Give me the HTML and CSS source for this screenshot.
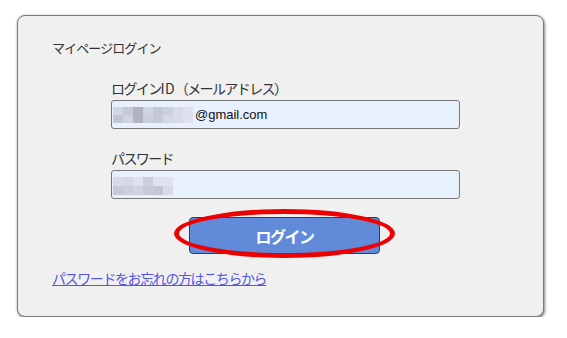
FILE: index.html
```html
<!DOCTYPE html>
<html lang="ja">
<head>
<meta charset="utf-8">
<title>マイページログイン</title>
<link rel="stylesheet" href="styles.css">
</head>
<body>
<div class="page">
  <div class="card">
    <div class="title">マイページログイン</div>
    <div class="form">
      <div class="label first">ログイン<span class="latin">ID</span>（メールアドレス）</div>
      <div class="input">
        <div class="blur email">
          <i class="c1"></i><i class="c2"></i><i class="c3"></i><i class="c4"></i><i class="c5"></i><i class="c6"></i><i class="c7"></i><i class="c8"></i>
          <i class="c5"></i><i class="c4"></i><i class="c3"></i><i class="c6"></i><i class="c2"></i><i class="c1"></i><i class="c7"></i><i class="c8"></i>
        </div>
        <span class="value">@gmail.com</span>
      </div>
      <div class="label">パスワード</div>
      <div class="input">
        <div class="blur pass">
          <i class="c7"></i><i class="c1"></i><i class="c8"></i><i class="c6"></i><i class="c8"></i><i class="c8"></i>
          <i class="c2"></i><i class="c6"></i><i class="c4"></i><i class="c2"></i><i class="c5"></i><i class="c7"></i>
        </div>
      </div>
      <div class="actions">
        <div class="button-wrap">
          <button class="button" type="button">ログイン</button>
          <span class="ring"></span>
        </div>
      </div>
    </div>
    <a class="forgot" href="#">パスワードをお忘れの方はこちらから</a>
  </div>
</div>
</body>
</html>
```

FILE: styles.css
```css
html, body {
  margin: 0;
  padding: 0;
  background: #ffffff;
}

body {
  font-family: "Noto Sans CJK JP", "Noto Sans", sans-serif;
  color: #222;
}

.page {
  padding: 15px 0 0 17px;
}

.card {
  box-sizing: border-box;
  width: 527px;
  height: 302px;
  background: #f0f0f0;
  border: 1px solid #7a7a7a;
  border-radius: 8px;
  box-shadow: 1px 2px 3px rgba(0, 0, 0, 0.4), 0 0 3px rgba(0, 0, 0, 0.2);
  padding: 23px 0 0 34px;
  display: flex;
  flex-direction: column;
  align-items: flex-start;
}

.title {
  font-size: 13px;
  line-height: 18px;
  letter-spacing: -0.9px;
  color: #333;
}

.form {
  margin-left: 59px;
  width: 349px;
  display: flex;
  flex-direction: column;
}

.label {
  font-size: 14px;
  line-height: 20px;
  letter-spacing: -1.6px;
  color: #333;
  margin-top: 19px;
  margin-bottom: 2px;
}

.label .latin {
  letter-spacing: 0.2px;
}

.label.first {
  margin-top: 21px;
}

.input {
  box-sizing: border-box;
  height: 29px;
  background: #e8f0fe;
  border: 1px solid #777;
  border-radius: 3px;
  display: flex;
  align-items: center;
  padding: 0 1px;
}

.blur {
  display: grid;
  grid-auto-rows: 8px;
}

.blur.email {
  grid-template-columns: repeat(8, 10px);
  margin-top: 1px;
}

.blur.pass {
  grid-template-columns: repeat(6, 10px);
  grid-auto-rows: 9px;
  margin-top: 2px;
}

.blur i {
  display: block;
}

.c1 { background: #d4d7e4; }
.c2 { background: #c6c9d7; }
.c3 { background: #b1b3c3; }
.c4 { background: #d0d4e0; }
.c5 { background: #c3c7d5; }
.c6 { background: #cbcedb; }
.c7 { background: #d8dbe7; }
.c8 { background: #dfe2ee; }

.value {
  font-family: "Liberation Sans", Arial, sans-serif;
  font-size: 13px;
  color: #111;
  margin-left: 2px;
}

.actions {
  display: flex;
  justify-content: flex-start;
  margin-top: 18px;
  padding-left: 78px;
}

.button-wrap {
  position: relative;
}

.button {
  display: block;
  box-sizing: border-box;
  width: 191px;
  height: 37px;
  background: #618ad8;
  border: 1px solid #2d3c66;
  border-radius: 4px;
  color: #ffffff;
  font-family: "Noto Sans CJK JP", sans-serif;
  font-size: 16px;
  font-weight: bold;
  letter-spacing: -1.5px;
  padding: 0;
}

.ring {
  position: absolute;
  left: -15px;
  top: -8px;
  width: 221px;
  height: 49px;
  box-sizing: border-box;
  border: 5px solid #ee0000;
  border-radius: 50%;
  pointer-events: none;
}

.forgot {
  margin-top: 14px;
  font-size: 14px;
  line-height: 20px;
  letter-spacing: -1.4px;
  color: #5656e6;
  text-decoration: underline;
}
```
